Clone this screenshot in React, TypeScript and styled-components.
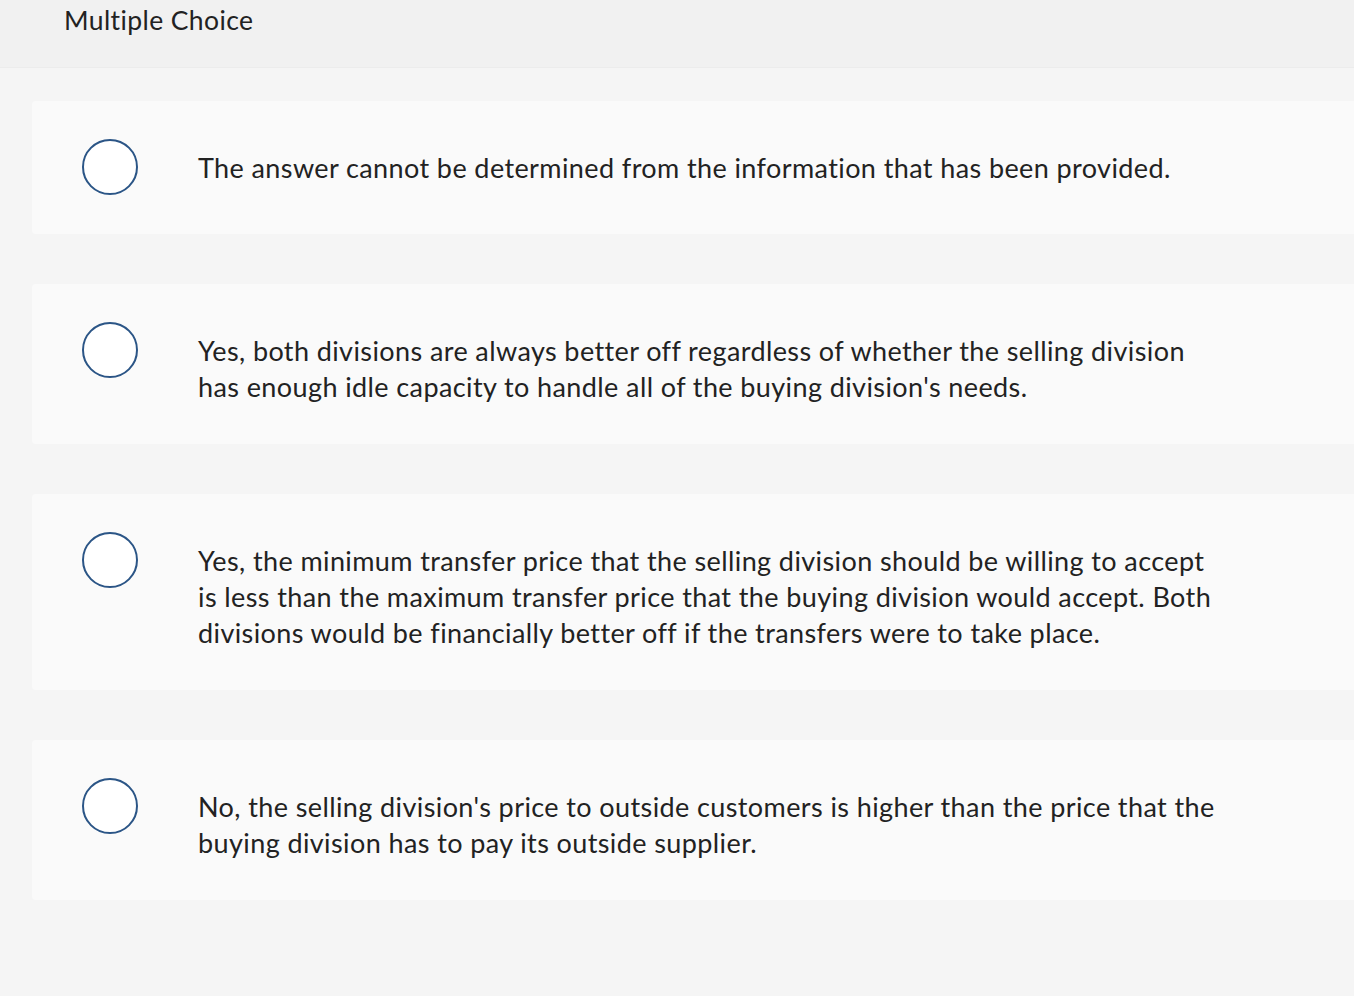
import React from "react";
import styled, { createGlobalStyle } from "styled-components";

const Global = createGlobalStyle`
  html, body { margin: 0; padding: 0; background: #f5f5f5; }
  body { font-family: Lato, "Open Sans", Arial, sans-serif; color: #222; overflow: hidden; }
`;

const Page = styled.div`
  width: 1354px;
  min-height: 996px;
  background: #f5f5f5;
  overflow: hidden;
`;

const Header = styled.header`
  height: 68px;
  background: #f1f1f1;
  border-bottom: 1px solid #ececec;
  box-sizing: border-box;
  padding: 4px 0 0 64px;
`;

const Title = styled.h2`
  margin: 0;
  font-size: 26.5px;
  font-weight: 400;
  letter-spacing: 0.4px;
  line-height: 32px;
  color: #222;
`;

const List = styled.div`
  display: flex;
  flex-direction: column;
  gap: 50px;
  padding: 33px 0 0 32px;
`;

const Card = styled.label`
  display: flex;
  align-items: flex-start;
  width: 1340px;
  box-sizing: border-box;
  padding: 38px 0 39px 50px;
  background: #fafafa;
  border-radius: 4px;
  cursor: pointer;
`;

const Radio = styled.span`
  flex: none;
  width: 56px;
  height: 56px;
  box-sizing: border-box;
  border-radius: 50%;
  border: 2px solid #2b5586;
  background: #fff;
`;

const Text = styled.div`
  margin-left: 60px;
  padding-top: 11px;
  font-size: 27px;
  letter-spacing: 0.4px;
  line-height: 36px;
  color: #222;
  width: 1060px;
`;

const options: string[][] = [
  ["The answer cannot be determined from the information that has been provided."],
  [
    "Yes, both divisions are always better off regardless of whether the selling division",
    "has enough idle capacity to handle all of the buying division's needs.",
  ],
  [
    "Yes, the minimum transfer price that the selling division should be willing to accept",
    "is less than the maximum transfer price that the buying division would accept. Both",
    "divisions would be financially better off if the transfers were to take place.",
  ],
  [
    "No, the selling division's price to outside customers is higher than the price that the",
    "buying division has to pay its outside supplier.",
  ],
];

export default function App() {
  return (
    <Page>
      <Global />
      <Header>
        <Title>Multiple Choice</Title>
      </Header>
      <List>
        {options.map((lines, i) => (
          <Card key={i}>
            <Radio />
            <Text>
              {lines.map((l, j) => (
                <React.Fragment key={j}>
                  {l}
                  {j < lines.length - 1 && <br />}
                </React.Fragment>
              ))}
            </Text>
          </Card>
        ))}
      </List>
    </Page>
  );
}
